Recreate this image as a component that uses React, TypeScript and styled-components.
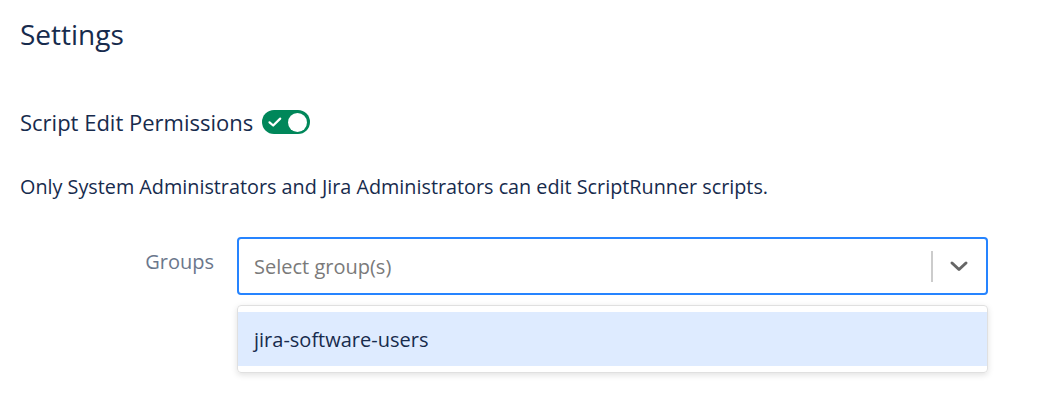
import React from "react";
import styled, { createGlobalStyle } from "styled-components";

const GlobalStyle = createGlobalStyle`
  body {
    margin: 0;
    background: #ffffff;
    font-family: "Open Sans", "Noto Sans", "Liberation Sans", sans-serif;
    color: #172b4d;
  }
`;

export default function App() {
  return (
    <>
      <GlobalStyle />
      <Page>
        <Title>Settings</Title>
        <ToggleRow>
          <SubTitle>Script Edit Permissions</SubTitle>
          <Toggle>
            <svg width="16" height="16" viewBox="0 0 16 16">
              <path d="M2.5 8.3 L6.2 11.5 L13.2 4.6" fill="none" stroke="#fff" strokeWidth="2.2" strokeLinecap="round" strokeLinejoin="round" />
            </svg>
            <Knob />
          </Toggle>
        </ToggleRow>
        <Description>Only System Administrators and Jira Administrators can edit ScriptRunner scripts.</Description>
        <FieldRow>
          <Label>Groups</Label>
          <SelectWrap>
            <Control>
              <Placeholder>Select group(s)</Placeholder>
              <Indicators>
                <Separator />
                <Chevron>
                  <svg width="20" height="20" viewBox="0 0 20 20">
                    <path d="M3 7 L10 13.5 L17 7" fill="none" stroke="#666" strokeWidth="3" strokeLinecap="round" strokeLinejoin="round" />
                  </svg>
                </Chevron>
              </Indicators>
            </Control>
            <Menu>
              <Option>jira-software-users</Option>
            </Menu>
          </SelectWrap>
        </FieldRow>
      </Page>
    </>
  );
}

const Page = styled.div`
  padding: 16px 20px;
  display: flex;
  flex-direction: column;
`;

const Title = styled.h1`
  margin: 0;
  font-size: 28px;
  font-weight: 400;
  line-height: 36px;
`;

const ToggleRow = styled.div`
  display: flex;
  align-items: center;
  margin-top: 55px;
  gap: 9px;
`;

const SubTitle = styled.h2`
  margin: 0;
  font-size: 22px;
  font-weight: 400;
  line-height: 30px;
`;

const Toggle = styled.div`
  width: 48px;
  height: 24px;
  border-radius: 12px;
  background: #00875a;
  display: flex;
  align-items: center;
  justify-content: space-between;
  padding: 0 3px 0 5px;
  box-sizing: border-box;
`;

const Knob = styled.div`
  width: 19px;
  height: 19px;
  border-radius: 50%;
  background: #ffffff;
`;

const Description = styled.p`
  margin: 36px 0 0;
  font-size: 19.8px;
  line-height: 28px;
`;

const FieldRow = styled.div`
  display: flex;
  align-items: flex-start;
  margin-top: 36px;
`;

const Label = styled.label`
  width: 217px;
  padding-right: 23px;
  box-sizing: border-box;
  text-align: right;
  font-size: 20px;
  line-height: 28px;
  padding-top: 11px;
  color: #6b778c;
`;

const SelectWrap = styled.div`
  width: 751px;
  display: flex;
  flex-direction: column;
`;

const Control = styled.div`
  height: 58px;
  border: 2px solid #2684ff;
  border-radius: 4px;
  box-sizing: border-box;
  display: flex;
  align-items: center;
  padding-left: 15px;
`;

const Placeholder = styled.span`
  flex: 1;
  font-size: 20px;
  color: #7a7a7a;
`;

const Indicators = styled.div`
  display: flex;
  align-items: center;
  height: 100%;
`;

const Separator = styled.span`
  width: 2px;
  height: 31px;
  background: #cccccc;
`;

const Chevron = styled.span`
  display: flex;
  padding: 0 17px 0 16px;
`;

const Menu = styled.div`
  margin-top: 10px;
  border: 1px solid #e0e0e0;
  border-radius: 4px;
  box-shadow: 0 2px 6px rgba(0, 0, 0, 0.12);
  padding: 6px 0;
`;

const Option = styled.div`
  background: #deebff;
  height: 54px;
  display: flex;
  align-items: center;
  padding-left: 16px;
  font-size: 20px;
  color: #172b4d;
`;
